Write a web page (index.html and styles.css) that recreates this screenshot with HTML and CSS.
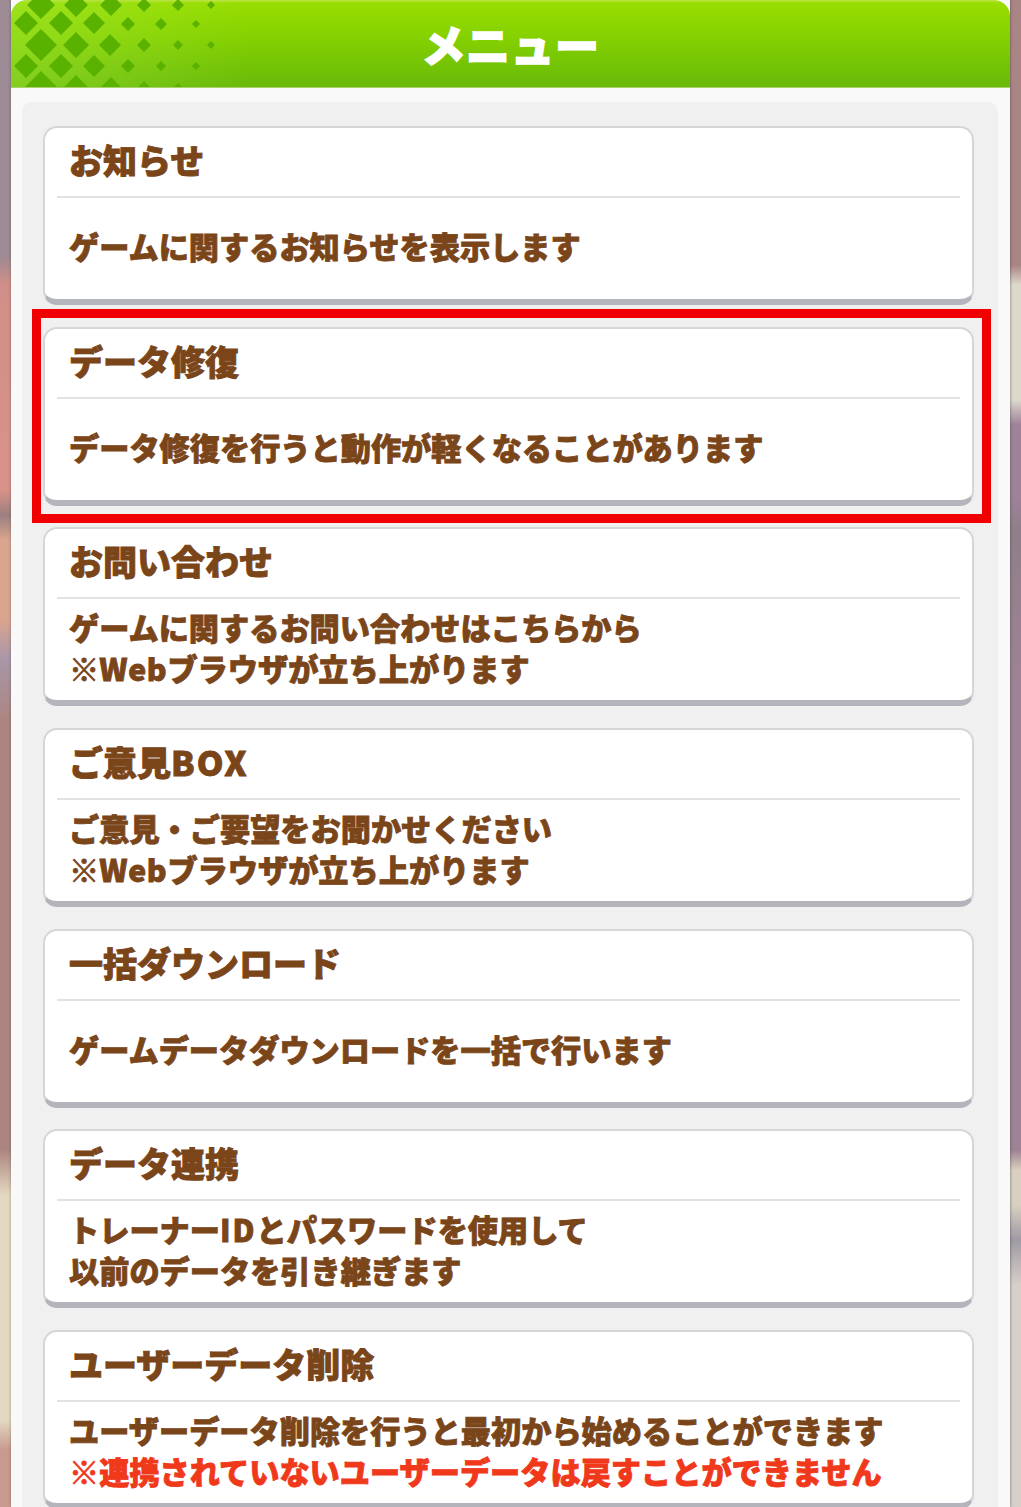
FILE: index.html
```html
<!DOCTYPE html>
<html lang="ja">
<head>
<meta charset="utf-8">
<title>メニュー</title>
<link rel="stylesheet" href="styles.css">
</head>
<body>
<main class="panel">
  <header class="panel-head">
    <svg class="lattice" width="240" height="88" viewBox="0 0 240 88" aria-hidden="true">
      <defs>
        <linearGradient id="glow" x1="0" x2="1" y1="0" y2="0">
          <stop offset="0" stop-color="#a4e83c" stop-opacity=".45"/>
          <stop offset=".7" stop-color="#a4e83c" stop-opacity=".15"/>
          <stop offset="1" stop-color="#a4e83c" stop-opacity="0"/>
        </linearGradient>
        <filter id="soft"><feGaussianBlur stdDeviation=".6"/></filter>
      </defs>
      <rect width="240" height="88" fill="url(#glow)"/>
      <path class="lattice-cells" filter="url(#soft)" d="M30 -9l14 14-14 14-14-14z M65 -7l12 12-12 12-12-12z M100 -6l11 11-11 11-11-11z M133 -2l7 7-7 7-7-7z M167 -1l6 6-6 6-6-6z M200 1l4 4-4 4-4-4z
      M15 11l12 12-12 12-12-12z M50 11l12 12-12 12-12-12z M83 12l11 11-11 11-11-11z M117 17l7 7-7 7-7-7z M150 18l6 6-6 6-6-6z M185 20l4 4-4 4-4-4z
      M30 29l16 16-16 16-16-16z M65 32l13 13-13 13-13-13z M99 34l11 11-11 11-11-11z M133 38l7 7-7 7-7-7z M167 40l5 5-5 5-5-5z M200 41l4 4-4 4-4-4z
      M15 54l12 12-12 12-12-12z M50 54l12 12-12 12-12-12z M83 55l11 11-11 11-11-11z M117 59l7 7-7 7-7-7z M150 61l5 5-5 5-5-5z M185 62l4 4-4 4-4-4z
      M30 71l16 16-16 16-16-16z M65 75l12 12-12 12-12-12z M100 77l10 10-10 10-10-10z M133 81l6 6-6 6-6-6z M167 83l4 4-4 4-4-4z"/>
    </svg>
    <h1 class="panel-title">メニュー</h1>
  </header>
  <div class="panel-body">
    <div class="list">
      <section class="card">
        <h2 class="card-title">お知らせ</h2>
        <div class="card-text"><p>ゲームに関するお知らせを表示します</p></div>
      </section>
      <section class="card">
        <h2 class="card-title">データ修復</h2>
        <div class="card-text"><p>データ修復を行うと動作が軽くなることがあります</p></div>
        <div class="highlight"></div>
      </section>
      <section class="card">
        <h2 class="card-title">お問い合わせ</h2>
        <div class="card-text"><p>ゲームに関するお問い合わせはこちらから</p><p>※<span class="latin">Web</span>ブラウザが立ち上がります</p></div>
      </section>
      <section class="card">
        <h2 class="card-title">ご意見<span class="latin-wide">BOX</span></h2>
        <div class="card-text"><p>ご意見・ご要望をお聞かせください</p><p>※<span class="latin">Web</span>ブラウザが立ち上がります</p></div>
      </section>
      <section class="card">
        <h2 class="card-title">一括ダウンロード</h2>
        <div class="card-text"><p>ゲームデータダウンロードを一括で行います</p></div>
      </section>
      <section class="card">
        <h2 class="card-title">データ連携</h2>
        <div class="card-text"><p>トレーナー<span class="latin-wide">ID</span>とパスワードを使用して</p><p>以前のデータを引き継ぎます</p></div>
      </section>
      <section class="card">
        <h2 class="card-title">ユーザーデータ削除</h2>
        <div class="card-text"><p>ユーザーデータ削除を行うと最初から始めることができます</p><p class="warning">※連携されていないユーザーデータは戻すことができません</p></div>
      </section>
    </div>
  </div>
</main>
</body>
</html>
```

FILE: styles.css
```css
* { box-sizing: border-box; margin: 0; padding: 0; }

html, body { height: 1507px; overflow: hidden; }

body {
  font-family: "Noto Sans CJK JP", "Noto Sans", sans-serif;
  padding: 0 11px;
  background:
    linear-gradient(to bottom, #9c8a94 0, #9c8a94 255px, #d08f88 285px, #d8928a 490px, #9b8080 515px, #d8a58f 540px, #d8a58f 620px, #a896a8 660px, #ac8580 720px, #ac8580 1150px, #e3d8c0 1195px, #e3d8c0 1420px, #c89a90 1450px) left top / 50% 100% no-repeat,
    linear-gradient(to bottom, #a98585 0, #a98585 265px, #ddd8cc 285px, #ddd8cc 400px, #9d8298 425px, #9d8298 500px, #8f7f8a 530px, #9d8395 680px, #9d8395 1150px, #d8d0c0 1170px, #d8d0c0 1205px, #a09aa5 1240px, #d8cfc9 1285px) right top / 50% 100% no-repeat;
}

.panel {
  height: 1507px;
  display: flex;
  flex-direction: column;
  background: #f9f9f9;
  box-shadow: 1px 0 2px rgba(60, 60, 60, .35), -1px 0 2px rgba(60, 60, 60, .2);
}

.panel-head {
  position: relative;
  flex: none;
  height: 88px;
  overflow: hidden;
  border-radius: 16px 16px 0 0;
  background: linear-gradient(to bottom, #c2e24a 0, #98dd00 3px, #86d200 40%, #68b90a 100%);
  border-bottom: 1px solid #a9d36a;
  display: flex;
  align-items: center;
  justify-content: center;
}

.lattice { position: absolute; left: 0; top: 0; }
.lattice-cells { fill: #5ab204; }

.panel-title {
  position: relative;
  color: #fff;
  font-size: 44px;
  line-height: 88px;
  font-weight: 900;
  letter-spacing: .5px;
  -webkit-text-stroke: 1.5px #fff;
}

.panel-body {
  flex: 1;
  min-height: 0;
  padding: 14px 12px 0 11px;
}

.list {
  height: 100%;
  padding: 24px 24px 0 21px;
  background: #f0f0f0;
  border-radius: 10px 10px 0 0;
  display: flex;
  flex-direction: column;
  gap: 21.7px;
}

.card {
  position: relative;
  flex: none;
  height: 179px;
  padding: 0 12px;
  background: #fff;
  border: 2px solid #d6d6d9;
  border-bottom: 6px solid #b4b4bc;
  border-radius: 14px;
  display: flex;
  flex-direction: column;
}

.card-title {
  flex: none;
  height: 70px;
  padding-left: 12px;
  border-bottom: 2px solid #e2e2e4;
  color: #7a4519;
  font-size: 34px;
  line-height: 63px;
  font-weight: 900;
  -webkit-text-stroke: .9px #7a4519;
  white-space: nowrap;
}

.card-text {
  flex: 1;
  padding-left: 12px;
  padding-bottom: 4px;
  display: flex;
  flex-direction: column;
  justify-content: center;
  color: #7a4519;
  font-size: 30.2px;
  line-height: 41px;
  font-weight: 900;
  -webkit-text-stroke: .8px #7a4519;
  white-space: nowrap;
}

.latin { letter-spacing: .7px; }
.latin-wide { letter-spacing: 2px; }

.warning {
  color: #f0381a;
  -webkit-text-stroke-color: #f0381a;
}

.highlight {
  position: absolute;
  left: -13px;
  right: -19px;
  top: -20px;
  bottom: -23px;
  border: 9px solid #f00000;
  pointer-events: none;
}
```
